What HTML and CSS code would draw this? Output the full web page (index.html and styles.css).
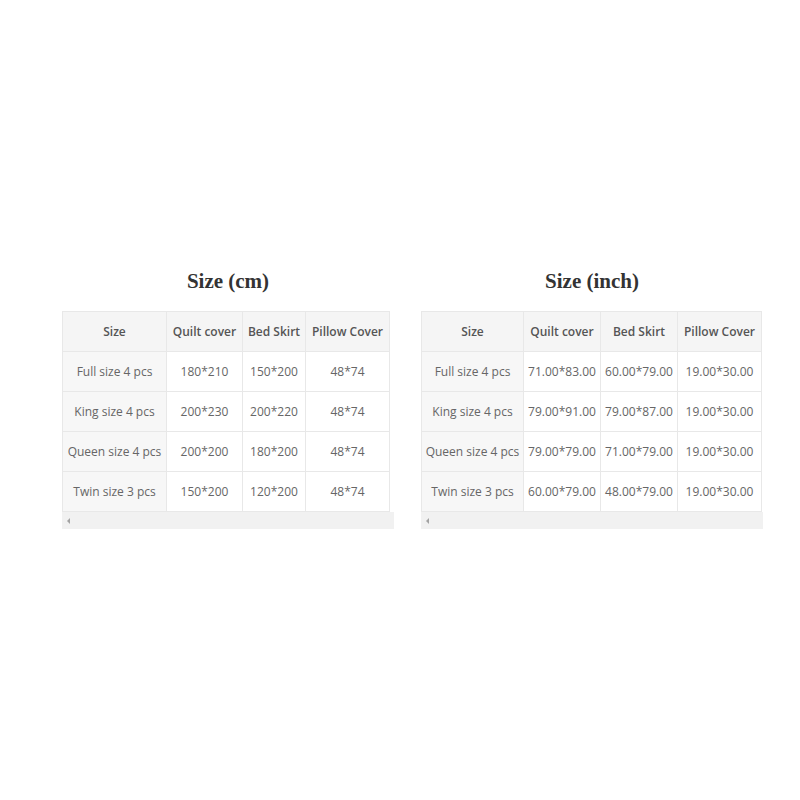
FILE: index.html
```html
<!DOCTYPE html>
<html>
<head>
<meta charset="utf-8">
<link rel="stylesheet" href="styles.css">
</head>
<body>
<div class="page">
  <section class="block block-cm">
    <h2 class="title">Size (cm)</h2>
    <table class="sizes">
      <colgroup><col class="c1"><col class="c2"><col class="c3"><col class="c4"></colgroup>
      <thead>
        <tr><th>Size</th><th>Quilt cover</th><th>Bed Skirt</th><th>Pillow Cover</th></tr>
      </thead>
      <tbody>
        <tr><td class="name">Full size 4 pcs</td><td>180*210</td><td>150*200</td><td>48*74</td></tr>
        <tr><td class="name">King size 4 pcs</td><td>200*230</td><td>200*220</td><td>48*74</td></tr>
        <tr><td class="name">Queen size 4 pcs</td><td>200*200</td><td>180*200</td><td>48*74</td></tr>
        <tr><td class="name">Twin size 3 pcs</td><td>150*200</td><td>120*200</td><td>48*74</td></tr>
      </tbody>
    </table>
    <div class="scrollbar"><span class="arrow"></span></div>
  </section>
  <section class="block block-inch">
    <h2 class="title">Size (inch)</h2>
    <table class="sizes">
      <colgroup><col class="i1"><col class="i2"><col class="i3"><col class="i4"></colgroup>
      <thead>
        <tr><th>Size</th><th>Quilt cover</th><th>Bed Skirt</th><th>Pillow Cover</th></tr>
      </thead>
      <tbody>
        <tr><td class="name">Full size 4 pcs</td><td>71.00*83.00</td><td>60.00*79.00</td><td>19.00*30.00</td></tr>
        <tr><td class="name">King size 4 pcs</td><td>79.00*91.00</td><td>79.00*87.00</td><td>19.00*30.00</td></tr>
        <tr><td class="name">Queen size 4 pcs</td><td>79.00*79.00</td><td>71.00*79.00</td><td>19.00*30.00</td></tr>
        <tr><td class="name">Twin size 3 pcs</td><td>60.00*79.00</td><td>48.00*79.00</td><td>19.00*30.00</td></tr>
      </tbody>
    </table>
    <div class="scrollbar"><span class="arrow"></span></div>
  </section>
</div>
</body>
</html>
```
FILE: styles.css
```css
html, body {
  margin: 0;
  padding: 0;
  background: #ffffff;
}

.page {
  display: flex;
  align-items: flex-start;
  padding-top: 268px;
  padding-left: 62px;
  gap: 27px;
}

.block-cm { width: 332px; }
.block-inch { width: 342px; }

.title {
  margin: 0 0 17px 0;
  font-family: "Liberation Serif", "Times New Roman", serif;
  font-weight: bold;
  font-size: 21px;
  line-height: 26px;
  color: #333333;
  text-align: center;
}

.sizes {
  border-collapse: collapse;
  table-layout: fixed;
  font-family: "Open Sans", "Noto Sans", sans-serif;
  font-size: 12px;
}

.block-cm .sizes { width: 327px; }
.block-inch .sizes { width: 340px; }

.c1 { width: 104px; }
.c2 { width: 76px; }
.c3 { width: 63px; }
.c4 { width: 84px; }

.i1 { width: 102px; }
.i2 { width: 77px; }
.i3 { width: 77px; }
.i4 { width: 84px; }

.sizes th,
.sizes td {
  height: 39px;
  padding: 0;
  border: 1px solid #e8e8e8;
  text-align: center;
  vertical-align: middle;
  white-space: nowrap;
}

.sizes th {
  background: #f5f5f5;
  color: #555555;
  font-weight: 600;
}

.sizes td {
  color: #666666;
  background: #ffffff;
}

.sizes td.name {
  background: #f7f7f7;
}

.scrollbar {
  height: 17px;
  background: #f1f1f1;
  display: flex;
  align-items: center;
  padding-left: 5px;
}

.arrow {
  width: 0;
  height: 0;
  border-top: 3px solid transparent;
  border-bottom: 3px solid transparent;
  border-right: 3px solid #a3a3a3;
}
```
